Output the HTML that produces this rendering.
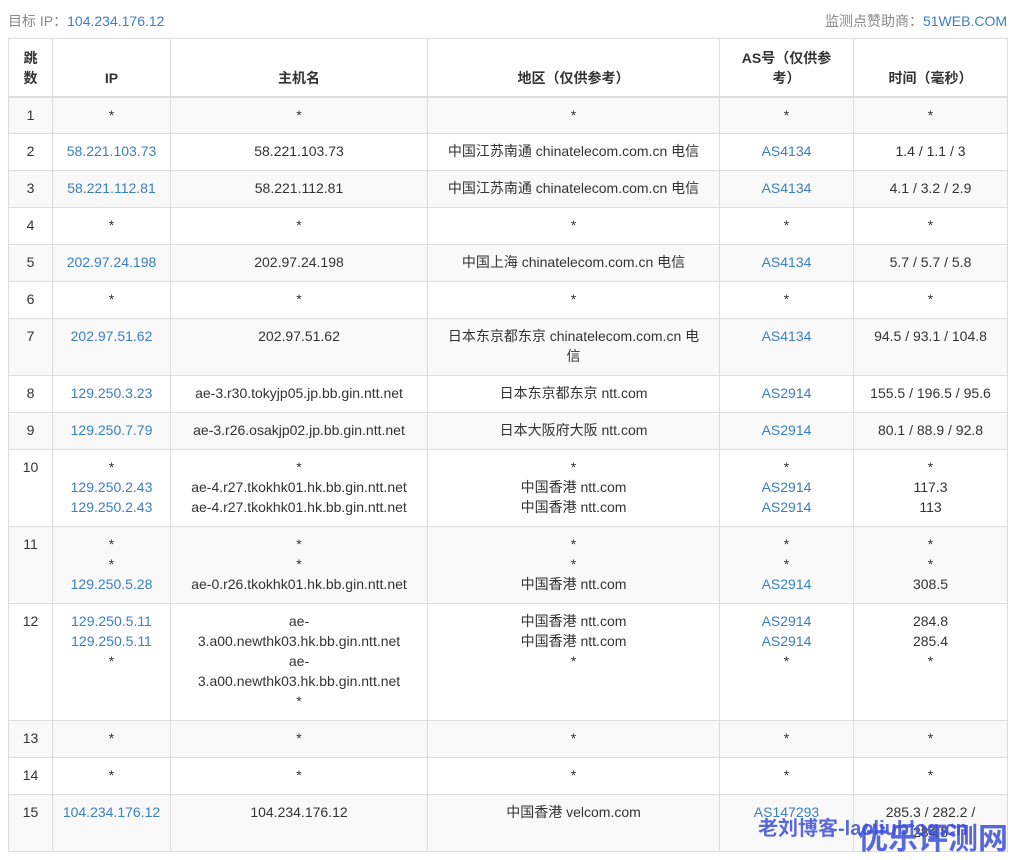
<!DOCTYPE html>
<html><head><meta charset="utf-8"><style>
body{margin:0;background:#fff;font-family:"Liberation Sans","Noto Sans CJK SC",sans-serif;font-size:14px;color:#333;}
.top{position:absolute;top:11px;left:8px;right:10px;height:20px;line-height:20px;color:#888;}
.top a{color:#3a7fc0;}
.top .r{position:absolute;right:0;top:0;}
table{position:absolute;left:8px;top:38px;width:999px;border-collapse:collapse;table-layout:fixed;}
td,th{border:1px solid #ddd;text-align:center;line-height:20px;padding:7px 6px 8px;vertical-align:top;}
th{vertical-align:bottom;border-bottom:2px solid #ddd;font-weight:bold;padding:8px 6px 8px;}
tbody tr:nth-child(odd){background:#f9f9f9;}
a{color:#3a7fc0;text-decoration:none;}
.wm{position:absolute;font-weight:bold;color:#3d4fd8;opacity:.85;white-space:nowrap;}
</style></head><body>
<div class="top">目标 IP：<a>104.234.176.12</a><span class="r">监测点赞助商：<a>51WEB.COM</a></span></div>
<table>
<colgroup><col style="width:44px"><col style="width:118px"><col style="width:257px"><col style="width:292px"><col style="width:134px"><col style="width:154px"></colgroup>
<thead><tr style="height:58px"><th>跳<br>数</th><th>IP</th><th>主机名</th><th>地区（仅供参考）</th><th>AS号（仅供参<br>考）</th><th>时间（毫秒）</th></tr></thead>
<tbody>
<tr style="height:37px"><td>1</td><td>*</td><td>*</td><td>*</td><td>*</td><td>*</td></tr>
<tr style="height:37px"><td>2</td><td><a>58.221.103.73</a></td><td>58.221.103.73</td><td>中国江苏南通 chinatelecom.com.cn 电信</td><td><a>AS4134</a></td><td>1.4 / 1.1 / 3</td></tr>
<tr style="height:37px"><td>3</td><td><a>58.221.112.81</a></td><td>58.221.112.81</td><td>中国江苏南通 chinatelecom.com.cn 电信</td><td><a>AS4134</a></td><td>4.1 / 3.2 / 2.9</td></tr>
<tr style="height:37px"><td>4</td><td>*</td><td>*</td><td>*</td><td>*</td><td>*</td></tr>
<tr style="height:37px"><td>5</td><td><a>202.97.24.198</a></td><td>202.97.24.198</td><td>中国上海 chinatelecom.com.cn 电信</td><td><a>AS4134</a></td><td>5.7 / 5.7 / 5.8</td></tr>
<tr style="height:37px"><td>6</td><td>*</td><td>*</td><td>*</td><td>*</td><td>*</td></tr>
<tr style="height:57px"><td>7</td><td><a>202.97.51.62</a></td><td>202.97.51.62</td><td>日本东京都东京 chinatelecom.com.cn 电<br>信</td><td><a>AS4134</a></td><td>94.5 / 93.1 / 104.8</td></tr>
<tr style="height:37px"><td>8</td><td><a>129.250.3.23</a></td><td>ae-3.r30.tokyjp05.jp.bb.gin.ntt.net</td><td>日本东京都东京 ntt.com</td><td><a>AS2914</a></td><td>155.5 / 196.5 / 95.6</td></tr>
<tr style="height:37px"><td>9</td><td><a>129.250.7.79</a></td><td>ae-3.r26.osakjp02.jp.bb.gin.ntt.net</td><td>日本大阪府大阪 ntt.com</td><td><a>AS2914</a></td><td>80.1 / 88.9 / 92.8</td></tr>
<tr style="height:77px"><td>10</td><td>*<br><a>129.250.2.43</a><br><a>129.250.2.43</a></td><td>*<br>ae-4.r27.tkokhk01.hk.bb.gin.ntt.net<br>ae-4.r27.tkokhk01.hk.bb.gin.ntt.net</td><td>*<br>中国香港 ntt.com<br>中国香港 ntt.com</td><td>*<br><a>AS2914</a><br><a>AS2914</a></td><td>*<br>117.3<br>113</td></tr>
<tr style="height:77px"><td>11</td><td>*<br>*<br><a>129.250.5.28</a></td><td>*<br>*<br>ae-0.r26.tkokhk01.hk.bb.gin.ntt.net</td><td>*<br>*<br>中国香港 ntt.com</td><td>*<br>*<br><a>AS2914</a></td><td>*<br>*<br>308.5</td></tr>
<tr style="height:117px"><td>12</td><td><a>129.250.5.11</a><br><a>129.250.5.11</a><br>*</td><td>ae-<br>3.a00.newthk03.hk.bb.gin.ntt.net<br>ae-<br>3.a00.newthk03.hk.bb.gin.ntt.net<br>*</td><td>中国香港 ntt.com<br>中国香港 ntt.com<br>*</td><td><a>AS2914</a><br><a>AS2914</a><br>*</td><td>284.8<br>285.4<br>*</td></tr>
<tr style="height:37px"><td>13</td><td>*</td><td>*</td><td>*</td><td>*</td><td>*</td></tr>
<tr style="height:37px"><td>14</td><td>*</td><td>*</td><td>*</td><td>*</td><td>*</td></tr>
<tr style="height:57px"><td>15</td><td><a>104.234.176.12</a></td><td>104.234.176.12</td><td>中国香港 velcom.com</td><td><a>AS147293</a></td><td>285.3 / 282.2 /<br>284.8</td></tr>
</tbody></table>
<div class="wm" style="left:758px;top:812px;font-size:20px;">老刘博客-laoliublog.cn</div>
<div class="wm" style="left:858px;top:814px;font-size:30px;">优乐评测网</div>
</body></html>
